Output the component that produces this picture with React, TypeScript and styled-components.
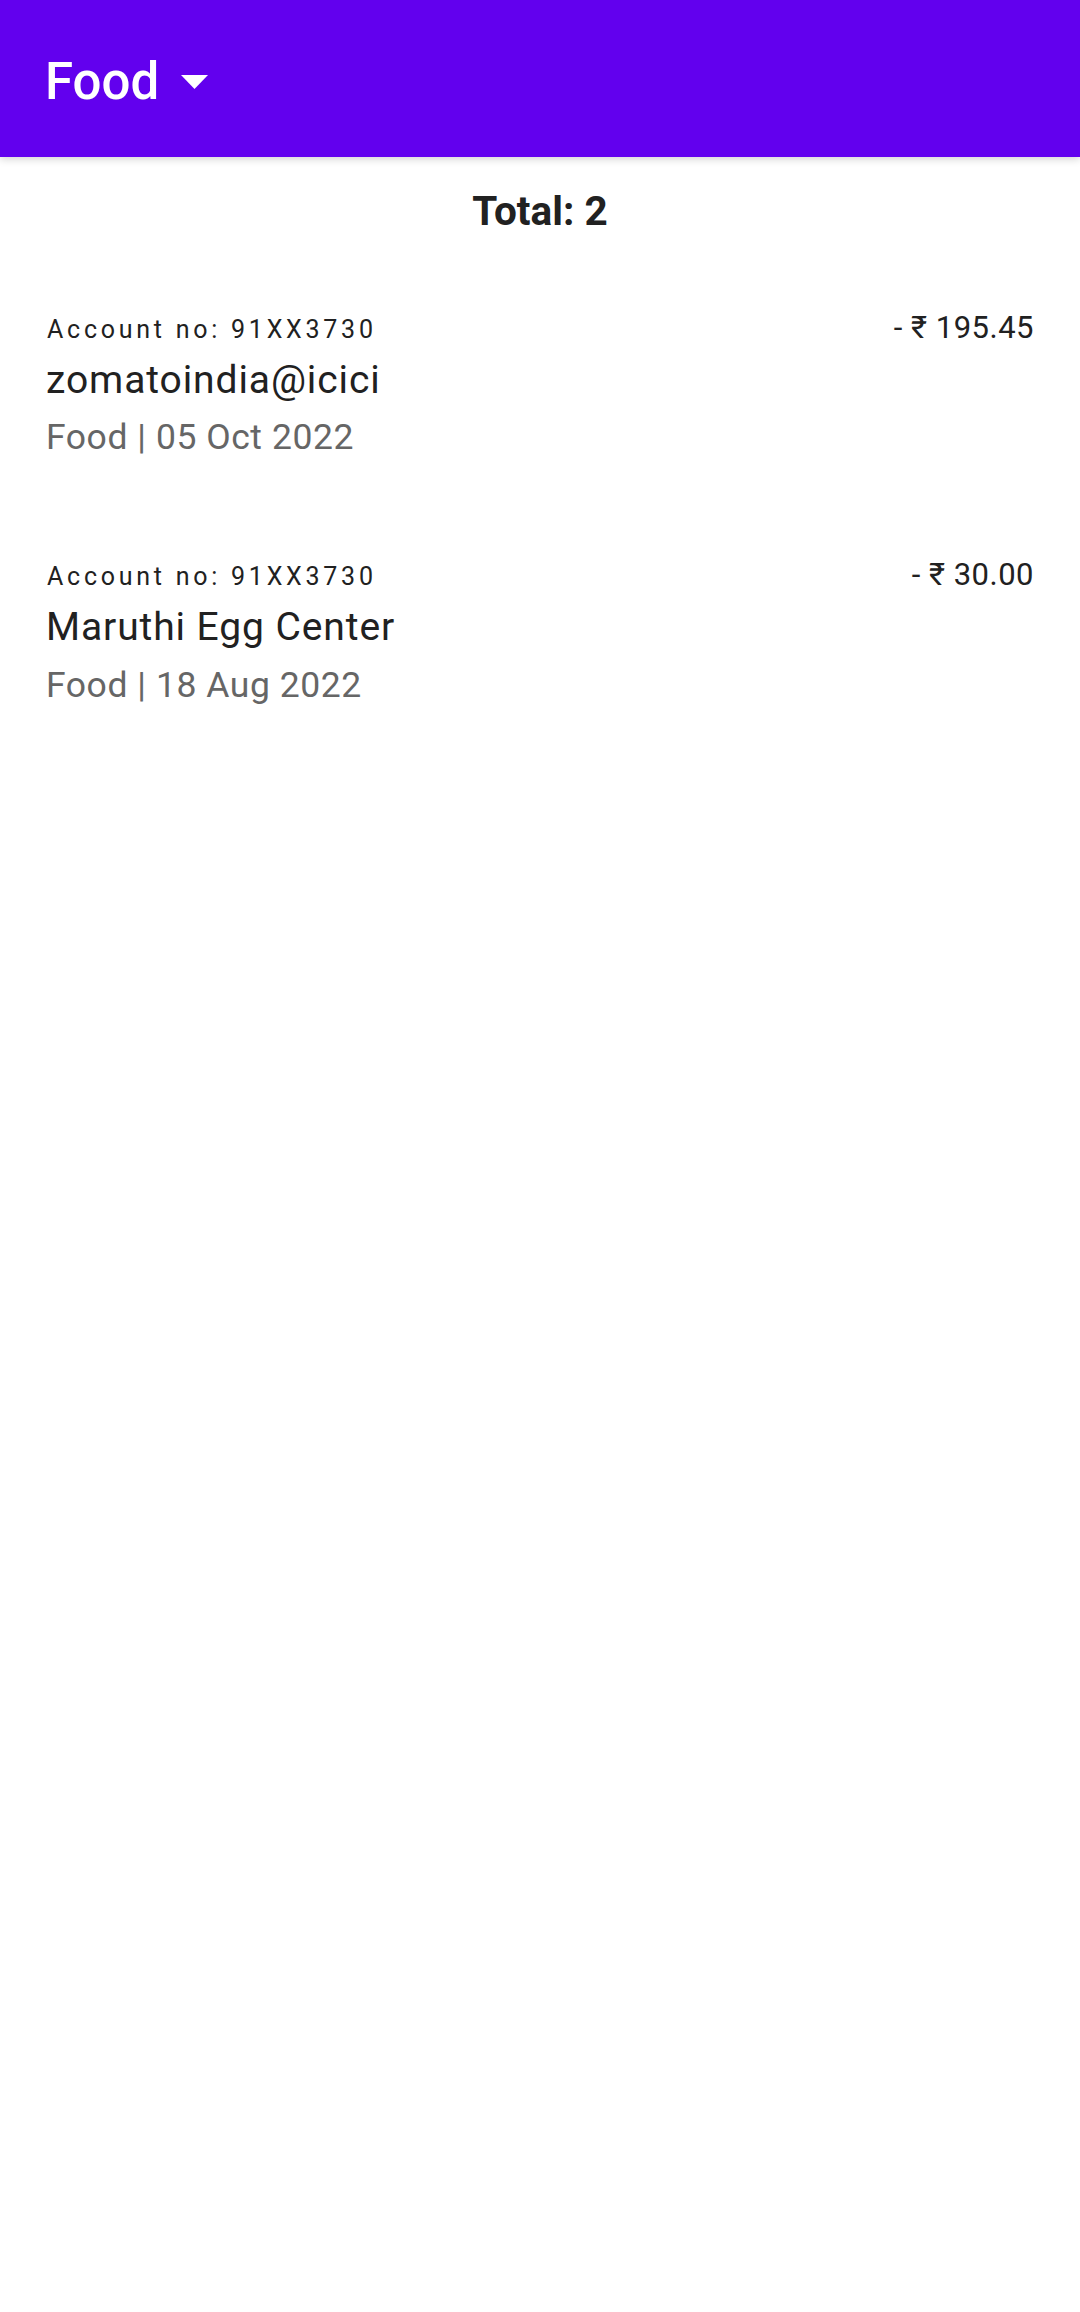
import React from "react";
import styled, { createGlobalStyle } from "styled-components";

const GlobalStyle = createGlobalStyle`
  html, body {
    margin: 0;
    padding: 0;
    background: #ffffff;
  }
  body {
    font-family: Roboto, "Noto Sans", "Liberation Sans", sans-serif;
    color: #212121;
  }
  * { box-sizing: border-box; }
`;

const Screen = styled.div`
  width: 1080px;
  min-height: 2312px;
  background: #ffffff;
  display: flex;
  flex-direction: column;
`;

const AppBar = styled.header`
  height: 157px;
  padding: 7px 0 0 45px;
  background: #6200ee;
  display: flex;
  align-items: center;
  box-shadow: 0 2px 8px rgba(0, 0, 0, 0.18);
  position: relative;
  z-index: 1;
`;

const SpinnerTitle = styled.div`
  font-size: 51px;
  line-height: 60px;
  font-weight: 500;
  color: #ffffff;
`;

const Caret = styled.svg`
  width: 27px;
  height: 14px;
  margin-left: 22px;
  display: block;
`;

const TotalLabel = styled.div`
  margin: 23.5px 0 35px;
  text-align: center;
  font-size: 40.5px;
  line-height: 60px;
  font-weight: 700;
  color: #212121;
`;

const List = styled.div`
  display: flex;
  flex-direction: column;
`;

const Item = styled.div`
  padding: 36px 46px 60px 46px;
  display: flex;
  flex-direction: column;
`;

const TopRow = styled.div`
  display: flex;
  justify-content: space-between;
  align-items: baseline;
`;

const Account = styled.div`
  font-size: 25px;
  line-height: 36px;
  letter-spacing: 3.75px;
  color: #212121;
  padding-left: 1px;
`;

const Amount = styled.div`
  font-size: 31px;
  line-height: 32px;
  letter-spacing: 0.5px;
  color: #212121;
`;

const Name = styled.div`
  margin-top: 6px;
  font-size: 39px;
  line-height: 52px;
  letter-spacing: 0.9px;
  color: #212121;
`;

const Meta = styled.div`
  margin-top: 5.5px;
  font-size: 35.5px;
  line-height: 52px;
  letter-spacing: 0.55px;
  color: #666666;
`;

type Txn = {
  account: string;
  amount: string;
  name: string;
  meta: string;
};

const txns: Txn[] = [
  {
    account: "Account no: 91XX3730",
    amount: "- ₹ 195.45",
    name: "zomatoindia@icici",
    meta: "Food | 05 Oct 2022",
  },
  {
    account: "Account no: 91XX3730",
    amount: "- ₹ 30.00",
    name: "Maruthi Egg Center",
    meta: "Food | 18 Aug 2022",
  },
];

export default function App() {
  return (
    <>
      <GlobalStyle />
      <Screen>
        <AppBar>
          <SpinnerTitle>Food</SpinnerTitle>
          <Caret viewBox="0 0 27 14">
            <polygon points="0,0 27,0 13.5,14" fill="#ffffff" />
          </Caret>
        </AppBar>
        <TotalLabel>Total: {txns.length}</TotalLabel>
        <List>
          {txns.map((t, i) => (
            <Item key={i}>
              <TopRow>
                <Account>{t.account}</Account>
                <Amount>{t.amount}</Amount>
              </TopRow>
              <Name>{t.name}</Name>
              <Meta>{t.meta}</Meta>
            </Item>
          ))}
        </List>
      </Screen>
    </>
  );
}
